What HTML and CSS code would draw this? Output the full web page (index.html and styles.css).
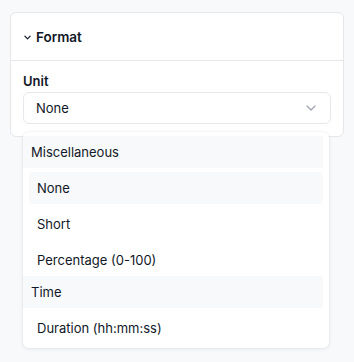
FILE: index.html
```html
<!DOCTYPE html>
<html lang="en">
<head>
  <meta charset="UTF-8" />
  <title>Format</title>
  <link rel="stylesheet" href="styles.css">
</head>
<body>
  <div class="card">
    <div class="card-head">
      <svg class="caret" width="7" height="7" viewBox="0 0 8 8"><path d="M1 2.5 L4 5.5 L7 2.5" fill="none" stroke="#111827" stroke-width="1.4" stroke-linecap="round" stroke-linejoin="round"/></svg>
      <span>Format</span>
    </div>
    <div class="card-body">
      <label class="field-label">Unit</label>
      <div class="select-wrap">
        <div class="select">
          <span>None</span>
          <svg class="select-caret" width="10" height="6" viewBox="0 0 10 6"><path d="M1 1 L5 5 L9 1" fill="none" stroke="#9ca3af" stroke-width="1.2" stroke-linecap="round" stroke-linejoin="round"/></svg>
        </div>

        <!-- open menu -->
        <div class="menu">
          <div class="group">Miscellaneous</div>
          <div class="option active">None</div>
          <div class="option">Short</div>
          <div class="option">Percentage (0-100)</div>
          <div class="group">Time</div>
          <div class="option">Duration (hh:mm:ss)</div>
        </div>
      </div>
    </div>
  </div>
</body>
</html>
```

FILE: styles.css
```css
body {
  margin: 0;
  background: #f8f9fa;
  font-family: 'Inter', 'Noto Sans', sans-serif;
  color: #111827;
  width: 354px;
  height: 362px;
  overflow: hidden;
}

.card {
  margin: 12px 10px 0;
  background: #fff;
  border: 1px solid #e5e7eb;
  border-radius: 6px;
}

.card-head {
  height: 47px;
  display: flex;
  align-items: center;
  gap: 5px;
  padding-left: 13px;
  border-bottom: 1px solid #e5e7eb;
  font-size: 13.5px;
  font-weight: 600;
}

.caret {
  margin-top: 1px;
}

.card-body {
  padding: 11px 12px 12px;
}

.field-label {
  display: block;
  font-size: 13px;
  font-weight: 600;
  line-height: 18px;
  margin-bottom: 2px;
}

.select-wrap {
  position: relative;
}

.select {
  height: 30px;
  border: 1px solid #e5e7eb;
  border-radius: 6px;
  display: flex;
  align-items: center;
  justify-content: space-between;
  padding: 0 14px 0 12px;
  font-size: 13px;
}

.menu {
  position: absolute;
  top: 40px;
  left: 0;
  width: 306px;
  box-sizing: border-box;
  padding: 4px 6px 4px 0;
  background: #fff;
  border-radius: 6px;
  box-shadow: 0 1px 4px rgba(0, 0, 0, 0.08), 0 0 0 1px rgba(0, 0, 0, 0.02);
  display: flex;
  flex-direction: column;
  gap: 4px;
  font-size: 13px;
}

.group {
  height: 32px;
  line-height: 32px;
  padding-left: 8px;
  background: #f8f9fa;
}

.option {
  height: 32px;
  line-height: 32px;
  margin-left: 6px;
  padding-left: 8px;
  border-radius: 4px;
}

.option + .group {
  margin-top: -4px;
}

.option.active {
  background: #f8f9fa;
}
```
